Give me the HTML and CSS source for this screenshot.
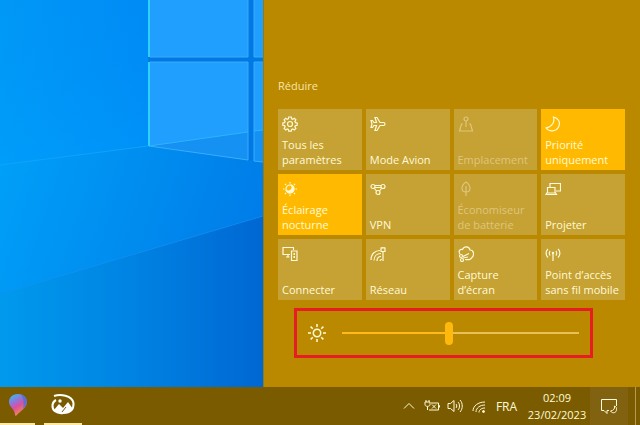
FILE: index.html
```html
<!DOCTYPE html>
<html lang="fr">

<head>
    <meta charset="UTF-8">
    <meta name="viewport" content="width=device-width, initial-scale=1.0">
    <title>Centre de notifications</title>
    <link rel="stylesheet" href="styles.css">
</head>

<body>
    <div class="desktop">
        <svg class="wallpaper" viewBox="0 0 263 387" preserveAspectRatio="xMinYMin slice" aria-hidden="true">
            <defs>
                <linearGradient id="wall" x1="0" y1="0" x2="1" y2="0">
                    <stop offset="0" stop-color="#009bf8" />
                    <stop offset="0.55" stop-color="#008cf6" />
                    <stop offset="1" stop-color="#0088f2" />
                </linearGradient>
                <linearGradient id="floor" x1="0" y1="0" x2="1" y2="0.3">
                    <stop offset="0" stop-color="#00a0f8" />
                    <stop offset="0.5" stop-color="#008ef0" />
                    <stop offset="1" stop-color="#007ce8" />
                </linearGradient>
                <linearGradient id="shade" x1="0" y1="0" x2="1" y2="0">
                    <stop offset="0" stop-color="#009aed" />
                    <stop offset="0.5" stop-color="#0083e3" />
                    <stop offset="1" stop-color="#0067d2" />
                </linearGradient>
                <linearGradient id="glow" x1="0" y1="0" x2="0" y2="1">
                    <stop offset="0" stop-color="#0088f0" stop-opacity="0.15" />
                    <stop offset="1" stop-color="#00a2ff" stop-opacity="0.3" />
                </linearGradient>
            </defs>
            <rect width="263" height="387" fill="url(#wall)" />
            <rect width="148" height="166" fill="url(#glow)" />
            <path d="M0 165L148 146L263 162V387H0Z" fill="url(#floor)" />
            <path d="M0 165L148 146" stroke="#0fa3fb" fill="none" />
            <path d="M0 294L263 216V387H0Z" fill="url(#shade)" />
            <path d="M0 294L263 216" stroke="#1692f2" stroke-opacity="0.7" fill="none" />
            <path d="M148 0H263V162L148 146Z" fill="#0079e4" />
            <path d="M149 0H248V57H149Z M254 0H263V57H254Z M149 62H248V160L149 146Z M254 62H263V162L254 161Z" fill="#219fff" />
            <path d="M149 146L248 132V160Z M254 131L263 130V162L254 161Z" fill="#1590f3" />
            <path d="M149 146L248 132M254 131L263 130" stroke="#2db4fb" fill="none" />
            <path d="M150 57H248V0M150 62H248V160L149 146M254 0V57H263M263 62H254V161L263 162" stroke="#38adfb" fill="none" />
            <path d="M149 0V57M149 62V146" stroke="#2fd0ff" stroke-width="2" fill="none" />
        </svg>

        <aside class="action-center">
            <button class="collapse" type="button">Réduire</button>

            <div class="tiles">
                <button class="tile" type="button">
                    <svg class="icon" viewBox="0 0 16 16"><path d="M6.7 1h2.6l.3 1.8 1.2.5 1.5-1 1.6 1.6-1 1.5.5 1.2 1.8.3v2.4l-1.8.3-.5 1.2 1 1.5-1.6 1.6-1.5-1-1.2.5-.3 1.8H6.7l-.3-1.8-1.2-.5-1.5 1-1.6-1.6 1-1.5-.5-1.2L.8 9.300V6.900l1.800-.3.500-1.200-1-1.500 1.600-1.600 1.500 1 1.200-.5z" /><circle cx="8" cy="8" r="2.500" /></svg>
                    <span>Tous les paramètres</span>
                </button>
                <button class="tile" type="button">
                    <svg class="icon" viewBox="0 0 16 16"><path d="M5 1.500h2l3 5h3.500c2 0 2 3 0 3H10l-3 5H5l1.500-5H4L2.500 11.500H1L2 8 1 4.500h1.500L4 6.500h2.500z" /></svg>
                    <span>Mode Avion</span>
                </button>
                <button class="tile" type="button" disabled>
                    <svg class="icon" viewBox="0 0 16 16"><circle cx="8" cy="3" r="2" /><path d="M8 5v6M5 8H3.500L1.500 15h13L12.500 8H11" /></svg>
                    <span>Emplacement</span>
                </button>
                <button class="tile tile-on" type="button">
                    <svg class="icon" viewBox="0 0 16 16"><path d="M8.500 1C10 6 7 11 1 12c3 4 10 4 12.500-1S13 2 8.500 1z" /></svg>
                    <span>Priorité uniquement</span>
                </button>
                <button class="tile tile-on" type="button">
                    <svg class="icon" viewBox="0 0 16 16"><circle cx="8" cy="8" r="4" /><path class="solid" d="M9 4a3 3 0 0 1-5 5a4 4 0 1 0 5-5z" /><path d="M8 1v1.500M8 13.500V15M1 8h1.500M13.500 8H15M3 3l1 1M12 12l1 1M13 3l-1 1M4 12l-1 1" /></svg>
                    <span>Éclairage nocturne</span>
                </button>
                <button class="tile" type="button">
                    <svg class="icon" viewBox="0 0 16 16"><circle cx="3" cy="5.500" r="2" /><circle cx="13" cy="5.500" r="2" /><circle cx="8" cy="11.500" r="2" /><path d="M5 4.500h6M5 6.500h6M4.500 7.500l2 2.500M11.500 7.500l-2 2.500" /></svg>
                    <span>VPN</span>
                </button>
                <button class="tile" type="button" disabled>
                    <svg class="icon" viewBox="0 0 16 16"><path d="M8 1C5 3 4 5 4 7.500S6 11 8 11s4-1 4-3.500S11 3 8 1zM8 5v10" /></svg>
                    <span>Économiseur de batterie</span>
                </button>
                <button class="tile" type="button">
                    <svg class="icon" viewBox="0 0 16 16"><path d="M5 6V2.500h10.500V10H11M2.500 6.500H10V12H2.500zM2.500 11L1 13.500h10.500L10 11" /></svg>
                    <span>Projeter</span>
                </button>
                <button class="tile" type="button">
                    <svg class="icon" viewBox="0 0 16 16"><path d="M8 8.500H1v-7h10.500V4M4 11h3.500M6 8.500V11M9.500 5h5.500v9.500H9.500z" /><path d="M11.500 8h1.500M11.500 11h1.500" stroke-width="2" /></svg>
                    <span>Connecter</span>
                </button>
                <button class="tile" type="button">
                    <svg class="icon" viewBox="0 0 16 16"><path d="M1 14C1 8 5 4.500 10 4.500M4 14.500C4 10 7 7.500 11 7.500M7 15c0-3 2-4.500 4-4.500M10 15c0-1 .5-1.500 2-1.500M11 2h4v3.500h-4zM13 5.500V15M12 1v1M14 1v1" /></svg>
                    <span>Réseau</span>
                </button>
                <button class="tile" type="button">
                    <svg class="icon" viewBox="0 0 16 16"><path d="M2 8C0 5 2 3 4.500 3.500C6 0 11 0 12 4c4 0 4.500 5 2 7.500c-1 2-4 2.500-7 2M5 10.500l6-3M5 12l5-1" /><circle cx="3" cy="10" r="1.500" /><circle cx="4" cy="14" r="1.500" /></svg>
                    <span>Capture d’écran</span>
                </button>
                <button class="tile" type="button">
                    <svg class="icon" viewBox="0 0 16 16"><path d="M3 3C.5 5 .5 9 3 11.500M13 3c2.500 2 2.500 6 0 8.500M5.200 5C4 6 4 8.500 5.200 9.500M10.800 5C12 6 12 8.500 10.800 9.500M8 7.500V15" /><circle cx="8" cy="7" r=".7" /></svg>
                    <span>Point d’accès sans fil mobile</span>
                </button>
            </div>

            <label class="brightness">
                <svg class="sun" viewBox="0 0 18 18" role="img" aria-label="Luminosité"><circle cx="9" cy="9" r="3.700" /><path d="M9 0v3M9 15v3M0 9h3M15 9h3M2.600 2.600l2.200 2.200M13.200 13.200l2.200 2.200M15.400 2.600l-2.200 2.200M4.800 13.200l-2.200 2.200" /></svg>
                <input class="slider" type="range" min="0" max="100" value="45">
            </label>
        </aside>
    </div>

    <footer class="taskbar">
        <div class="apps">
            <button class="app" type="button" aria-label="Paint 3D">
                <svg class="app-icon" viewBox="0 0 24 24">
                    <defs>
                        <linearGradient id="drop" x1="0.1" y1="0" x2="0.6" y2="1">
                            <stop offset="0" stop-color="#36c0f0" />
                            <stop offset="0.35" stop-color="#8b78dc" />
                            <stop offset="0.6" stop-color="#dc4f9d" />
                            <stop offset="1" stop-color="#f5924b" />
                        </linearGradient>
                    </defs>
                    <path d="M12 1C6 1 3 5 3 9c0 5 6 7 6 13c0 1 1 1 2 0c3-4 10-7 10-13c0-5-4-8-9-8z" fill="url(#drop)" />
                    <path d="M15 1.500c4 1 6 4 6 7.500c0 3-2 5-4 7c1-5 1-10-2-14.500z" fill="#4274dc" fill-opacity="0.8" />
                </svg>
            </button>
            <button class="app" type="button" aria-label="Photos">
                <svg class="app-icon" viewBox="0 0 24 24">
                    <path d="M3 3C9 1 21 2 22.500 10c.5 6-3 10-10 10C5 21 1 17 1.500 12C2 9 3 8 5 7" stroke="#fff" stroke-width="2" fill="none" />
                    <path d="M3 17l5-6 4 4 5-6 5 7c-2 3-5 4-10 4c-4 0-7-1-9-3z" fill="#fff" />
                    <path d="M11 19l4-5" stroke="#7a5b00" />
                    <circle cx="9" cy="8" r="1.700" fill="#fff" />
                </svg>
            </button>
        </div>

        <div class="tray">
            <button class="tray-button" type="button" aria-label="Icônes cachées">
                <svg class="icon" viewBox="0 0 16 16"><path d="M3 10.500l5-5 5 5" /></svg>
            </button>
            <button class="tray-button" type="button" aria-label="Batterie">
                <svg class="icon" viewBox="0 0 16 16"><path d="M1 4h5v2.500C6 9 1 9 1 6.500zM2 4V2M5 4V2M3.500 8.500V12M7 5h7.500v7H5M14.500 7.500h1v2M8 6.500l4 4M12 6.500l-4 4" /></svg>
            </button>
            <button class="tray-button" type="button" aria-label="Volume">
                <svg class="icon" viewBox="0 0 16 16"><path d="M1 5.500h2.500L7 2.500v11L3.500 10.500H1zM9 6c1 1 1 3 0 4M11 4c2 2 2 6 0 8M13 2c3 3 3 9 0 12" /></svg>
            </button>
            <button class="tray-button" type="button" aria-label="Réseau">
                <svg class="icon" viewBox="0 0 16 16"><path d="M3 13C3 8 8 4 15 4M6 14c0-4 4-7 9-7M9 14.500c0-3 3-4.500 6-4.500" /><circle class="solid" cx="13.500" cy="13.500" r="1" /></svg>
            </button>
            <button class="language" type="button">FRA</button>
            <button class="clock" type="button">
                <time>02:09</time>
                <time>23/02/2023</time>
            </button>
            <button class="notifications" type="button" aria-label="Notifications">
                <svg class="note-icon" viewBox="0 0 18 18"><path d="M9 13.500H7v3L4 13.500H1.500v-11h15V9" /><path class="moon" d="M14.500 9c.5 3-1 4.500-4 5c2 3 6 2 6-1.500c0-2-.5-3-2-3.500z" /></svg>
            </button>
            <button class="show-desktop" type="button" aria-label="Afficher le bureau"></button>
        </div>
    </footer>
</body>

</html>
```
FILE: styles.css
```css
* {
    box-sizing: border-box;
}

body {
    display: flex;
    flex-direction: column;
    min-height: 100vh;
    margin: 0;
    background-color: #ba8900;
    color: #fffbd8;
    font-family: "Open Sans", "Noto Sans", sans-serif;
    font-size: 12px;
    line-height: 15px;
}

button {
    margin: 0;
    padding: 0;
    border: none;
    background: none;
    color: inherit;
    font: inherit;
    cursor: pointer;
}

.desktop {
    display: grid;
    grid-template-columns: minmax(0, 1fr) 377px;
    flex: 1;
}

.wallpaper {
    width: 100%;
    height: 100%;
    min-height: 0;
}

/* Centre de notifications */
.action-center {
    display: flex;
    flex-direction: column;
    justify-content: flex-end;
    padding: 0 15px 29px 14px;
    border-left: 1px solid #8f7a1c;
    background-color: #ba8900;
}

.collapse {
    align-self: flex-start;
    margin-bottom: 16px;
    color: #f8e6a8;
    font-size: 11px;
}

.tiles {
    display: grid;
    grid-template-columns: repeat(4, 1fr);
    grid-auto-rows: 61px;
    gap: 4px;
}

.tile {
    display: flex;
    flex-direction: column;
    justify-content: space-between;
    padding: 7px 4px 3px;
    background-color: #c6a133;
    font-size: 11px;
    font-weight: 500;
    text-align: left;
}

.tile-on {
    background-color: #ffb900;
}

.tile:disabled {
    color: #dec67d;
}

.icon {
    display: block;
    width: 16px;
    height: 16px;
}

.icon,
.sun,
.note-icon {
    fill: none;
    stroke: currentColor;
}

.tile .icon {
    stroke-width: 1.2;
}

.solid {
    fill: currentColor;
}

/* Luminosité */
.brightness {
    display: flex;
    align-items: center;
    gap: 16px;
    height: 50px;
    margin: 8px 32px 0 16px;
    padding: 0 11px;
    border: 3px solid #e71d24;
}

.sun {
    flex: none;
    width: 18px;
    height: 18px;
    stroke-width: 1.5;
}

.slider {
    flex: 1;
    min-width: 0;
    height: 24px;
    margin: 0;
    background: linear-gradient(to right, #ffb91c 45%, #e8bf58 45%) center / 100% 2px no-repeat;
    appearance: none;
}

.slider::-webkit-slider-thumb {
    width: 8px;
    height: 23px;
    border-radius: 4px;
    background-color: #ffb90c;
    appearance: none;
}

/* Barre des tâches */
.taskbar {
    display: flex;
    justify-content: space-between;
    height: 38px;
    background-color: #7a5b00;
}

.apps {
    display: flex;
    gap: 9px;
}

.app {
    display: flex;
    justify-content: center;
    align-items: center;
    width: 38px;
    border-bottom: 2px solid #ffe9a6;
}

.app:first-child {
    width: 35px;
}

.app-icon {
    width: 24px;
    height: 24px;
}

.tray {
    display: flex;
    align-items: stretch;
}

.tray-button {
    width: 23px;
    padding-left: 4px;
}

.language {
    width: 35px;
}

.clock {
    width: 66px;
    font-size: 11px;
    line-height: 17px;
}

.clock time {
    display: block;
}

.notifications {
    display: flex;
    justify-content: center;
    align-items: center;
    width: 38px;
    background-color: #806210;
}

.note-icon {
    width: 18px;
    height: 18px;
}

.moon {
    fill: #7a5b00;
}

.show-desktop {
    width: 5px;
    margin-left: 7px;
    border-left: 1px solid #b39a55;
}
```
